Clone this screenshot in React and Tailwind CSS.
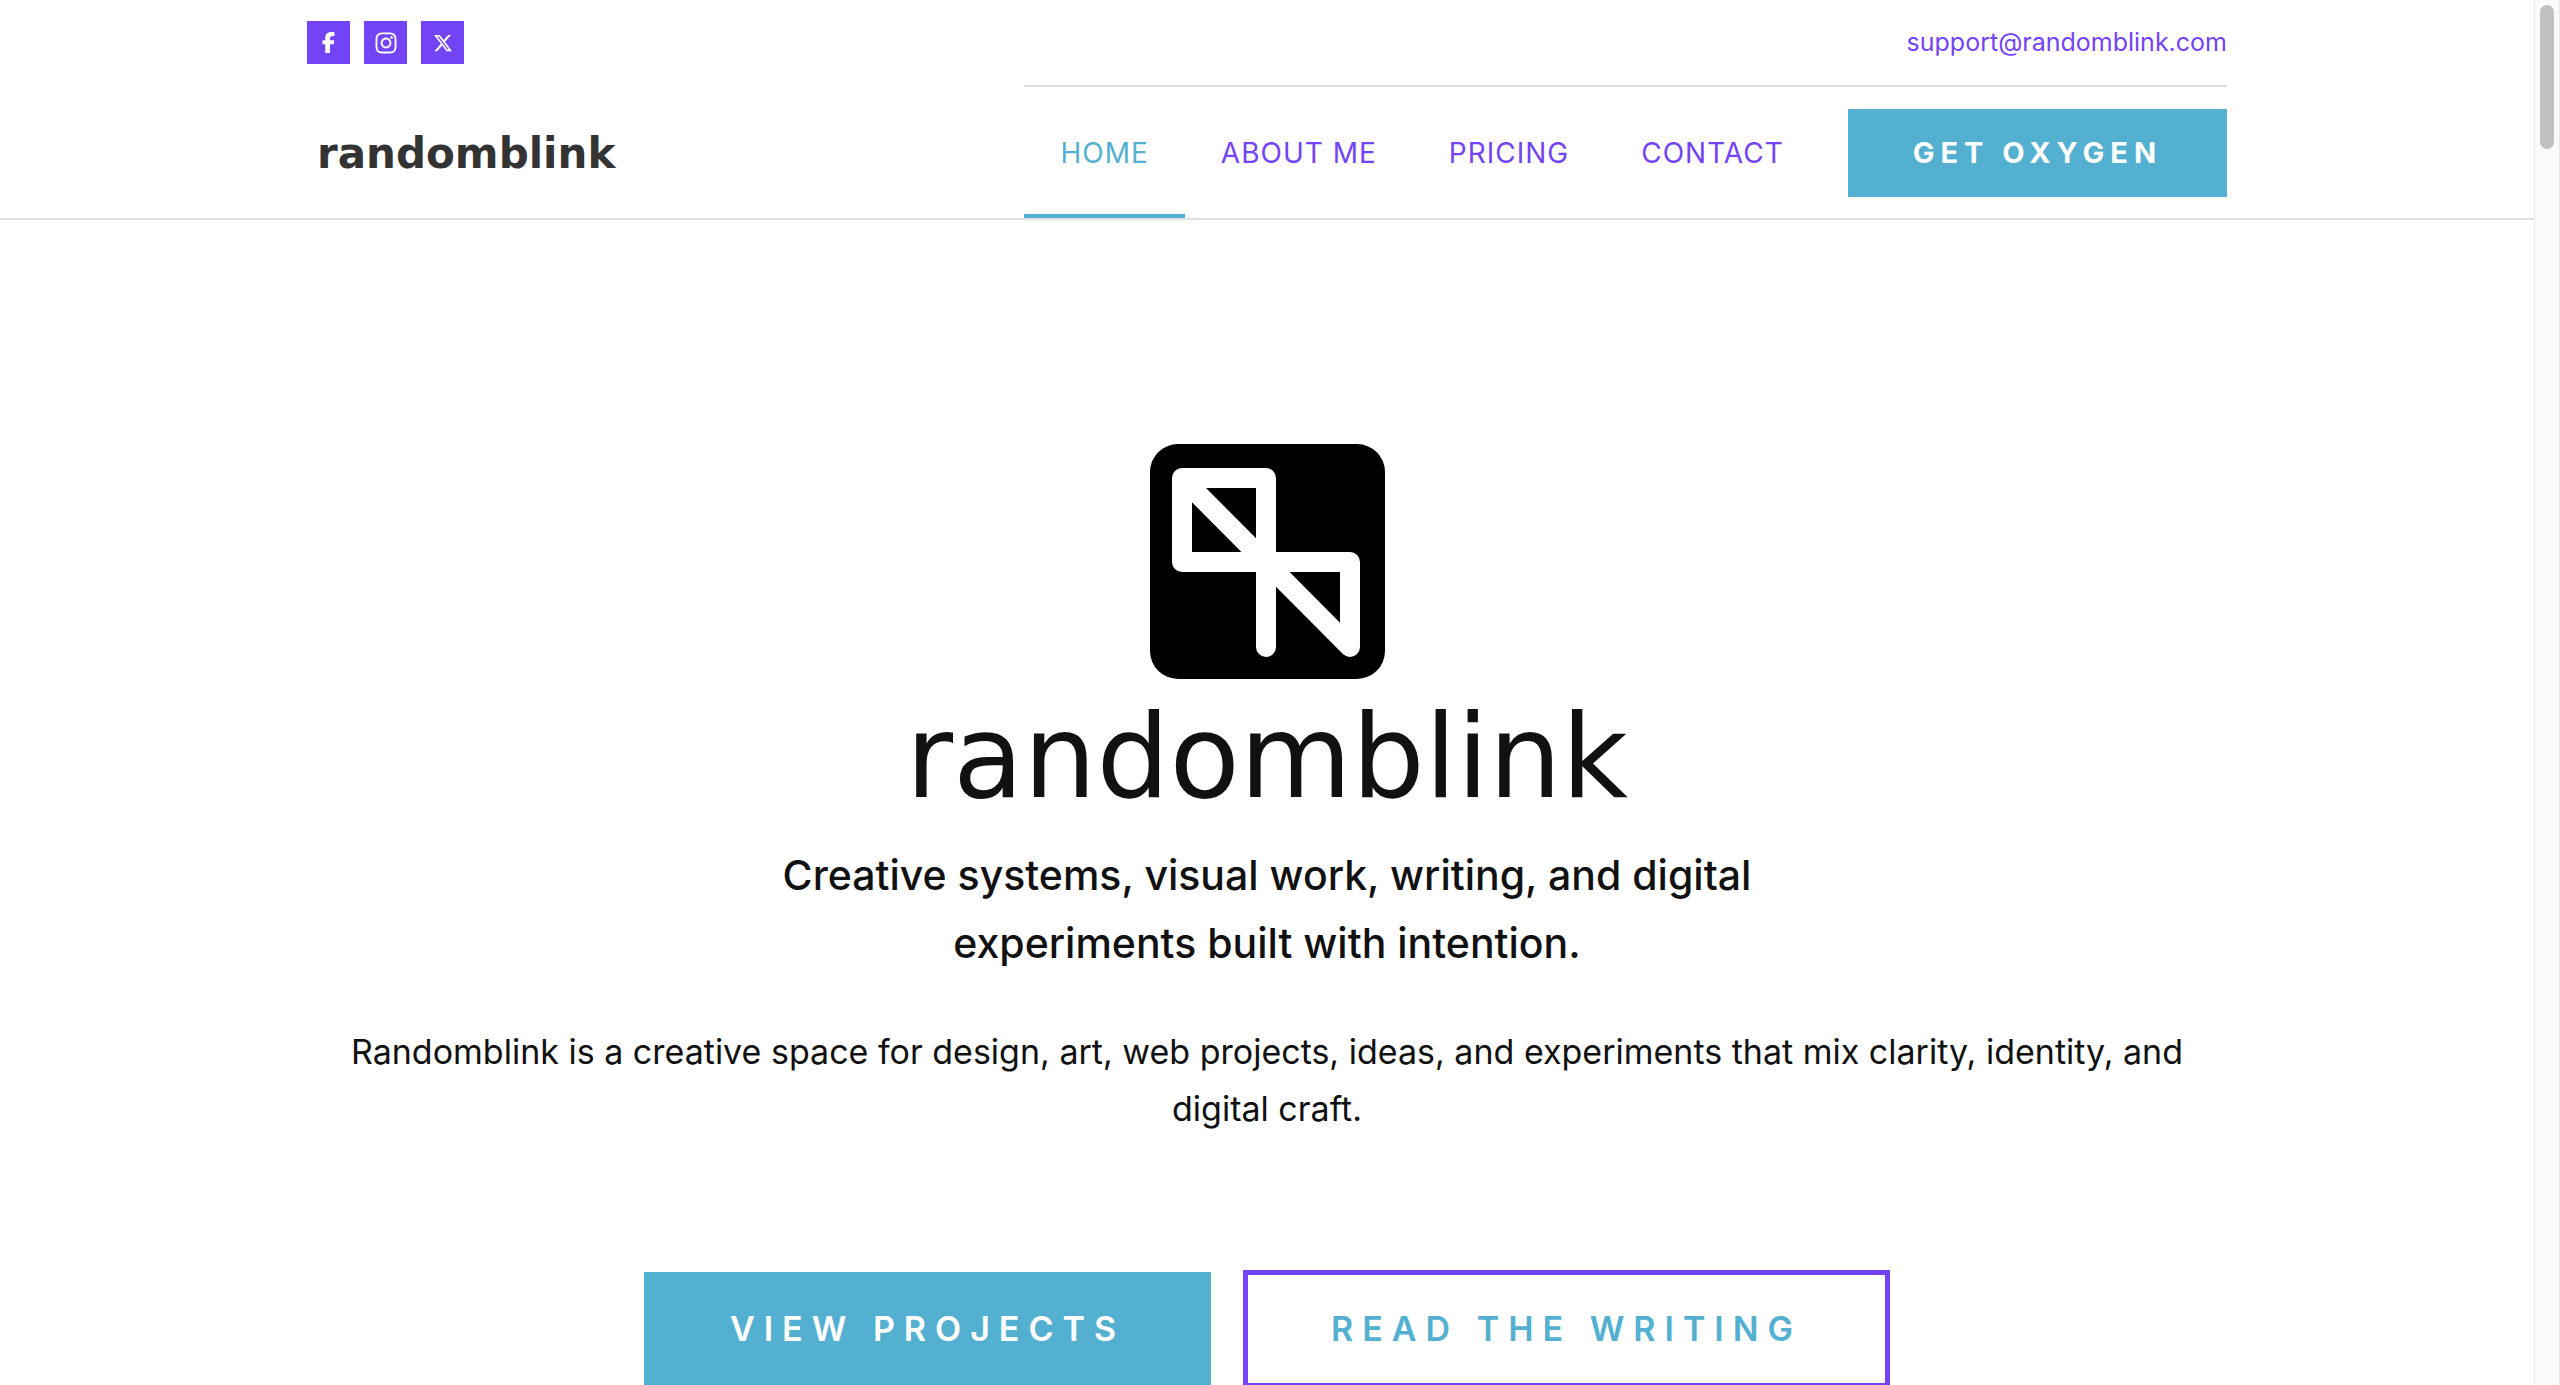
import { FaFacebookF, FaInstagram, FaXTwitter } from 'react-icons/fa6'

const SOCIALS = [
  { name: 'Facebook',  icon: <FaFacebookF size={21}/> },
  { name: 'Instagram', icon: <FaInstagram size={24}/> },
  { name: 'X',         icon: <FaXTwitter size={20}/> },
]

const LINKS = ['Home', 'About me', 'Pricing', 'Contact']

function Logo() {
  return (
    <svg viewBox="0 0 235 235" className="w-[235px] h-[235px]" role="img" aria-label="randomblink logo">
      <rect width="235" height="235" rx="28" fill="#000"/>
      <path d="M116 203V34H32V118H200V203L32 34" fill="none" stroke="#fff" strokeWidth="20"
        strokeLinecap="round" strokeLinejoin="round"/>
    </svg>
  )
}

function Header() {
  return (
    <header className="border-b-2 border-[#e0e0e0]">
      <div className="w-full max-w-[1920px] mx-auto flex justify-between">
        <div className="flex flex-col">
          <div className="h-[85px] flex items-center gap-[14px]">
            {SOCIALS.map(s => (
              <a key={s.name} href="#" aria-label={s.name}
                className="w-[43px] h-[43px] flex items-center justify-center bg-[#7344f5] text-white">
                {s.icon}
              </a>
            ))}
          </div>
          <a href="#" className="flex-1 flex items-center pl-2.5 pt-1 font-['DejaVu_Sans',sans-serif] font-bold text-[42px] text-[#333]">
            randomblink
          </a>
        </div>

        <div className="flex flex-col">
          <div className="h-[87px] flex items-center justify-end border-b-2 border-[#e0e0e0]">
            <a href="mailto:support@randomblink.com" className="text-[25px] text-[#7344f5]">support@randomblink.com</a>
          </div>
          <div className="h-[131px] flex items-center">
            <nav className="h-full flex">
              {LINKS.map((label, i) => (
                <a key={label} href="#"
                  className={`flex items-center px-9 border-y-4 border-t-transparent text-[28px] tracking-[1px] uppercase ${i === 0 ? 'text-[#54b0d1] border-b-[#54b0d1]' : 'text-[#7344f5] border-b-transparent'}`}>
                  {label}
                </a>
              ))}
            </nav>
            <button className="ml-7 h-[88px] px-[65px] bg-[#54b0d1] text-white text-[29px] font-bold tracking-[6px] uppercase">
              Get Oxygen
            </button>
          </div>
        </div>
      </div>
    </header>
  )
}

function Hero() {
  return (
    <section className="w-full max-w-[1920px] mx-auto pt-56 flex flex-col items-center text-center text-[#111]">
      <Logo/>
      <h1 className="mt-[22px] font-['DejaVu_Sans',sans-serif] text-[115px] leading-[112px]">randomblink</h1>
      <p className="mt-7 max-w-[1100px] text-[41px] leading-[68px] font-medium">
        Creative systems, visual work, writing, and digital experiments built with intention.
      </p>
      <p className="mt-[46px] text-[34px] leading-[57px]">
        Randomblink is a creative space for design, art, web projects, ideas, and experiments that mix clarity, identity, and digital craft.
      </p>
      <div className="mt-[133px] flex items-center gap-8 text-[34px] leading-[44px] font-semibold tracking-[9px]">
        <button className="px-[86px] py-[35px] bg-[#54b0d1] text-white uppercase">View projects</button>
        <button className="px-[83px] py-8 border-5 border-[#7344f5] text-[#54b0d1] uppercase">Read the writing</button>
      </div>
    </section>
  )
}

export default function App() {
  return (
    <div className="h-screen overflow-hidden flex bg-white font-['Inter',sans-serif]">
      <main className="flex-1 min-w-0">
        <Header/>
        <Hero/>
      </main>
      {/* scrollbar */}
      <div className="w-[26px] shrink-0 flex justify-center pt-[5px] bg-[#fafafa] border-x border-[#e8e8e8]">
        <div className="w-[14px] h-36 rounded-full bg-[#c1c1c1]"/>
      </div>
    </div>
  )
}
